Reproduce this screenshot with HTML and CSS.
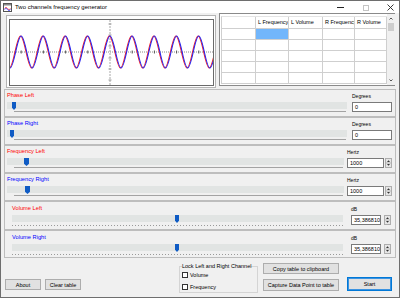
FILE: index.html
```html
<!DOCTYPE html>
<html lang="en">
<head>
    <meta charset="UTF-8">
    <title>Two channels frequency generator</title>
    <link rel="stylesheet" href="styles.css">
</head>
<body>
    <div class="window">
        <div class="titlebar">
            <svg class="app-icon" viewBox="0 0 9 9" width="9" height="9">
                <rect x="0.5" y="0.5" width="8" height="8" fill="#fff" stroke="#555"/>
                <rect x="1" y="1" width="7" height="1.5" fill="#8a8a8a"/>
                <path d="M1.5 5.5 Q3 3 4.5 5.5 T7.5 5.5" fill="none" stroke="#e33" stroke-width="0.8"/>
                <path d="M1.5 6.5 Q3 4 4.5 6.5 T7.5 6.5" fill="none" stroke="#33f" stroke-width="0.8"/>
            </svg>
            <span class="title">Two channels frequency generator</span>
            <div class="caption">
                <svg width="7" height="7" viewBox="0 0 7 7"><line x1="0" y1="3.5" x2="7" y2="3.5" stroke="#222"/></svg>
                <svg width="7" height="7" viewBox="0 0 7 7"><rect x="1.5" y="1.5" width="5" height="5" fill="none" stroke="#c4c4c4"/></svg>
                <svg width="7" height="7" viewBox="0 0 7 7"><path d="M0.5 0.5L6.5 6.5M6.5 0.5L0.5 6.5" stroke="#222" stroke-width="0.9"/></svg>
            </div>
        </div>

        <div class="client">
            <div class="top-row">
                <svg class="scope" viewBox="0 0 210 73" width="210" height="73">
                    <defs>
                        <clipPath id="plot"><rect x="4" y="5" width="203" height="65"/></clipPath>
                    </defs>
                    <rect x="0.5" y="0.5" width="209" height="72" fill="#fff" stroke="#b4b4b4"/>
                    <rect x="3.5" y="4.5" width="204" height="66" fill="#fff" stroke="#6a6a6a"/>
                    <line x1="4" y1="37" x2="207" y2="37" stroke="#8c8c8c" stroke-dasharray="1 1"/>
                    <line x1="104" y1="5" x2="104" y2="70" stroke="#a8a8a8" stroke-dasharray="2 1"/>
                    <path d="M102.5 9h3M102.5 20h3M102.5 31h3M102.5 43h3M102.5 54h3M102.5 65h3" stroke="#9a9a9a"/>
                    <path d="M15.2 35.5v3M37.4 35.5v3M59.6 35.5v3M81.8 35.5v3M126.2 35.5v3M148.4 35.5v3M170.6 35.5v3M192.8 35.5v3" stroke="#555"/>
                    <g clip-path="url(#plot)" fill="none" stroke-width="1.1">
                        <path transform="translate(-0.7 0)" stroke="#ff2020" d="M-7 21 C-2.97 21 0.07 53 4.1 53 S11.17 21 15.2 21 S22.27 53 26.3 53 S33.37 21 37.4 21 S44.47 53 48.5 53 S55.57 21 59.6 21 S66.67 53 70.7 53 S77.77 21 81.8 21 S88.87 53 92.9 53 S99.97 21 104 21 S111.07 53 115.1 53 S122.17 21 126.2 21 S133.27 53 137.3 53 S144.37 21 148.4 21 S155.47 53 159.5 53 S166.57 21 170.6 21 S177.67 53 181.7 53 S188.77 21 192.8 21 S199.87 53 203.9 53 S210.97 21 215 21"/>
                        <path stroke="#2424f0" d="M-7 21 C-2.97 21 0.07 53 4.1 53 S11.17 21 15.2 21 S22.27 53 26.3 53 S33.37 21 37.4 21 S44.47 53 48.5 53 S55.57 21 59.6 21 S66.67 53 70.7 53 S77.77 21 81.8 21 S88.87 53 92.9 53 S99.97 21 104 21 S111.07 53 115.1 53 S122.17 21 126.2 21 S133.27 53 137.3 53 S144.37 21 148.4 21 S155.47 53 159.5 53 S166.57 21 170.6 21 S177.67 53 181.7 53 S188.77 21 192.8 21 S199.87 53 203.9 53 S210.97 21 215 21"/>
                    </g>
                </svg>

                <div class="grid-view">
                    <div class="cells">
                        <div class="grid">
                            <div class="cell"></div>
                            <div class="cell">L Frequency</div>
                            <div class="cell">L Volume</div>
                            <div class="cell">R Frequency</div>
                            <div class="cell">R Volume</div>

                            <div class="cell"></div><div class="cell sel"></div><div class="cell"></div><div class="cell"></div><div class="cell"></div>
                            <div class="cell"></div><div class="cell"></div><div class="cell"></div><div class="cell"></div><div class="cell"></div>
                            <div class="cell"></div><div class="cell"></div><div class="cell"></div><div class="cell"></div><div class="cell"></div>
                            <div class="cell"></div><div class="cell"></div><div class="cell"></div><div class="cell"></div><div class="cell"></div>
                            <div class="cell"></div><div class="cell"></div><div class="cell"></div><div class="cell"></div><div class="cell"></div>
                        </div>
                    </div>
                    <div class="vscroll">
                        <svg class="arrow" viewBox="0 0 8 9" width="8" height="9"><polyline points="2.5,5.5 4,4 5.5,5.5" fill="none" stroke="#555"/></svg>
                        <div class="sb-thumb"></div>
                        <div class="sb-track"></div>
                        <svg class="arrow" viewBox="0 0 8 9" width="8" height="9"><polyline points="2.5,3.5 4,5 5.5,3.5" fill="none" stroke="#555"/></svg>
                    </div>
                </div>
            </div>

            <div class="panel">
                <div class="slide">
                    <div class="name left">Phase Left</div>
                    <div class="track"><span class="thumb" style="left: 5px"></span></div>
                    <div class="rule"></div>
                </div>
                <div class="value">
                    <div class="unit">Degrees</div>
                    <div class="field-row"><div class="field">0</div></div>
                </div>
            </div>

            <div class="panel">
                <div class="slide">
                    <div class="name right">Phase Right</div>
                    <div class="track"><span class="thumb" style="left: 3px"></span></div>
                    <div class="rule"></div>
                </div>
                <div class="value">
                    <div class="unit">Degrees</div>
                    <div class="field-row"><div class="field">0</div></div>
                </div>
            </div>

            <div class="panel freq">
                <div class="slide">
                    <div class="name left">Frequency Left</div>
                    <div class="track"><span class="thumb" style="left: 17px"></span></div>
                    <div class="rule"></div>
                </div>
                <div class="value">
                    <div class="unit">Hertz</div>
                    <div class="field-row">
                        <div class="field">1000</div>
                        <svg class="spin" viewBox="0 0 7 10" width="7" height="10">
                            <rect x="0.5" y="0.5" width="6" height="9" fill="#e6e6e6" stroke="#adadad"/>
                            <line x1="1" y1="5" x2="6" y2="5" stroke="#b8b8b8"/>
                            <path d="M2 4h3L3.5 2.3z" fill="#333"/>
                            <path d="M2 6h3L3.5 7.7z" fill="#333"/>
                        </svg>
                    </div>
                </div>
            </div>

            <div class="panel freq">
                <div class="slide">
                    <div class="name right">Frequency Right</div>
                    <div class="track"><span class="thumb" style="left: 18px"></span></div>
                    <div class="rule"></div>
                </div>
                <div class="value">
                    <div class="unit">Hertz</div>
                    <div class="field-row">
                        <div class="field">1000</div>
                        <svg class="spin" viewBox="0 0 7 10" width="7" height="10">
                            <rect x="0.5" y="0.5" width="6" height="9" fill="#e6e6e6" stroke="#adadad"/>
                            <line x1="1" y1="5" x2="6" y2="5" stroke="#b8b8b8"/>
                            <path d="M2 4h3L3.5 2.3z" fill="#333"/>
                            <path d="M2 6h3L3.5 7.7z" fill="#333"/>
                        </svg>
                    </div>
                </div>
            </div>

            <div class="panel vol first">
                <div class="slide">
                    <div class="name left">Volume Left</div>
                    <div class="track"><span class="thumb" style="left: 163px"></span></div>
                    <div class="ticks"></div>
                </div>
                <div class="value">
                    <div class="unit">dB</div>
                    <div class="field-row">
                        <div class="field">35,386810</div>
                        <svg class="spin" viewBox="0 0 7 10" width="7" height="10">
                            <rect x="0.5" y="0.5" width="6" height="9" fill="#e6e6e6" stroke="#adadad"/>
                            <line x1="1" y1="5" x2="6" y2="5" stroke="#b8b8b8"/>
                            <path d="M2 4h3L3.5 2.3z" fill="#333"/>
                            <path d="M2 6h3L3.5 7.7z" fill="#333"/>
                        </svg>
                    </div>
                </div>
            </div>

            <div class="panel vol">
                <div class="slide">
                    <div class="name right">Volume Right</div>
                    <div class="track"><span class="thumb" style="left: 163px"></span></div>
                    <div class="ticks"></div>
                </div>
                <div class="value">
                    <div class="unit">dB</div>
                    <div class="field-row">
                        <div class="field">35,386810</div>
                        <svg class="spin" viewBox="0 0 7 10" width="7" height="10">
                            <rect x="0.5" y="0.5" width="6" height="9" fill="#e6e6e6" stroke="#adadad"/>
                            <line x1="1" y1="5" x2="6" y2="5" stroke="#b8b8b8"/>
                            <path d="M2 4h3L3.5 2.3z" fill="#333"/>
                            <path d="M2 6h3L3.5 7.7z" fill="#333"/>
                        </svg>
                    </div>
                </div>
            </div>

            <div class="bottom-row">
                <div class="btn about">About</div>
                <div class="btn clear">Clear table</div>
                <fieldset class="lock">
                    <legend>Lock Left and Right Channel</legend>
                    <label class="check"><span class="box"></span>Volume</label>
                    <label class="check second"><span class="box"></span>Frequency</label>
                </fieldset>
                <div class="table-buttons">
                    <div class="btn copy">Copy table to clipboard</div>
                    <div class="btn capture">Capture Data Point to table</div>
                </div>
                <div class="btn start">Start</div>
            </div>
        </div>
    </div>
</body>
</html>
```

FILE: styles.css
```css
* {
    box-sizing: border-box;
}

body {
    margin: 0;
    background: #fff;
    color: #000;
    font-family: "Liberation Sans", Arial, sans-serif;
    font-size: 5.5px;
}

.window {
    width: 400px;
    height: 298px;
    border: 1px solid #6e6e6e;
    background: #f0f0f0;
    display: flex;
    flex-direction: column;
}

/* Title bar */
.titlebar {
    height: 12px;
    flex-shrink: 0;
    background: #fff;
    display: flex;
    align-items: center;
}

.app-icon {
    margin-left: 2px;
}

.title {
    margin-left: 3px;
    font-size: 6px;
    white-space: nowrap;
}

.caption {
    margin-left: auto;
    margin-right: 5px;
    display: flex;
    gap: 18px;
}

.client {
    flex: 1;
    display: flex;
    flex-direction: column;
}

/* Graph and table */
.top-row {
    height: 76px;
    flex-shrink: 0;
    display: flex;
    align-items: flex-start;
    padding-left: 5px;
}

.scope {
    display: block;
    margin-top: 2px;
}

.grid-view {
    width: 176px;
    height: 73px;
    margin-left: 3px;
    border: 1px solid #8a8a8a;
    background: #fff;
    display: flex;
}

.cells {
    flex: 1;
    padding: 2px 0 0 1px;
}

.grid {
    display: grid;
    grid-template-columns: 34px 33px 34px 32px 32px;
    grid-template-rows: 12px repeat(5, 11px);
    border-left: 1px solid #cfcfcf;
    border-top: 1px solid #e4e4e4;
}

.cell {
    border-right: 1px solid #cfcfcf;
    border-bottom: 1px solid #cfcfcf;
    padding-left: 2px;
    overflow: hidden;
    white-space: nowrap;
    line-height: 11px;
}

.cell.sel {
    background: #72b6fb;
}

.vscroll {
    width: 8px;
    background: #f0f0f0;
    display: flex;
    flex-direction: column;
}

.arrow {
    display: block;
}

.sb-thumb {
    height: 8px;
    margin: 0 1px;
    background: #cdcdcd;
}

.sb-track {
    flex: 1;
}

/* Slider panels */
.panel {
    width: 392px;
    height: 28px;
    flex-shrink: 0;
    margin-left: 3px;
    border: 1px solid #bdbdbd;
    padding: 0 3px 0 2px;
    display: flex;
}

.slide {
    flex: 1;
    display: flex;
    flex-direction: column;
    padding-top: 2px;
}

.name {
    height: 7px;
    line-height: 7px;
    font-size: 5.7px;
    white-space: nowrap;
}

.name.left {
    color: #ff0000;
}

.name.right {
    color: #0000ff;
}

.track {
    position: relative;
    height: 7px;
    margin-top: 3px;
    background: #e1e4e3;
}

.thumb {
    position: absolute;
    top: 0;
    width: 4px;
    height: 8px;
    background: #0f5bc4;
    clip-path: polygon(0 0, 100% 0, 100% 72%, 50% 100%, 0 72%);
}

.rule {
    height: 1px;
    margin: 2px 1px 0 7px;
    background: #a3a3a3;
}

.ticks {
    height: 1px;
    margin-top: 3px;
    background: repeating-linear-gradient(90deg, #9a9a9a 0 1px, transparent 1px 3px);
}

.value {
    width: 40px;
    margin-left: 5px;
    padding-top: 3px;
    display: flex;
    flex-direction: column;
}

.unit {
    height: 6px;
    line-height: 6px;
    font-size: 5px;
}

.field-row {
    display: flex;
    margin-top: 3px;
}

.field {
    flex: 1;
    height: 10px;
    border: 1px solid #7a7a7a;
    background: #fff;
    padding-left: 2px;
    line-height: 8px;
    white-space: nowrap;
    overflow: hidden;
}

.spin {
    display: block;
    margin-left: 1px;
}

.freq .value {
    width: 45px;
    margin-left: 3px;
}

.freq .thumb {
    width: 5px;
}

.vol {
    padding: 0 4px 0 7px;
}

.vol.first {
    height: 29px;
}

.vol .slide {
    padding-top: 3px;
}

.vol .value {
    margin-left: 8px;
    padding-top: 4px;
}

.vol .field-row {
    margin-top: 3px;
}

.vol .spin {
    margin-left: 3px;
}

/* Bottom buttons */
.bottom-row {
    flex: 1;
    display: flex;
    align-items: flex-start;
    padding-left: 4px;
}

.btn {
    height: 11px;
    border: 1px solid #adadad;
    background: #e1e1e1;
    display: flex;
    align-items: center;
    justify-content: center;
    white-space: nowrap;
}

.about {
    width: 36px;
    margin-top: 21px;
}

.clear {
    width: 36px;
    margin: 21px 0 0 4px;
}

.lock {
    width: 79px;
    height: 30px;
    margin: 5px 0 0 98px;
    padding: 0 0 0 2px;
    min-width: 0;
    border: 1px solid #d4d4d4;
}

.lock legend {
    padding: 0;
    line-height: 6px;
    white-space: nowrap;
}

.check {
    display: flex;
    align-items: center;
    height: 6px;
    margin-top: 3px;
}

.check.second {
    margin-top: 6px;
}

.box {
    width: 6px;
    height: 6px;
    border: 1px solid #333;
    background: #fff;
    margin-right: 2px;
}

.table-buttons {
    width: 76px;
    margin: 5px 0 0 5px;
    display: flex;
    flex-direction: column;
}

.capture {
    height: 12px;
    margin-top: 5px;
}

.start {
    width: 45px;
    height: 14px;
    margin: 19px 0 0 8px;
    border-color: #0078d7;
    box-shadow: inset 0 0 0 1px #3c93e0;
}
```
